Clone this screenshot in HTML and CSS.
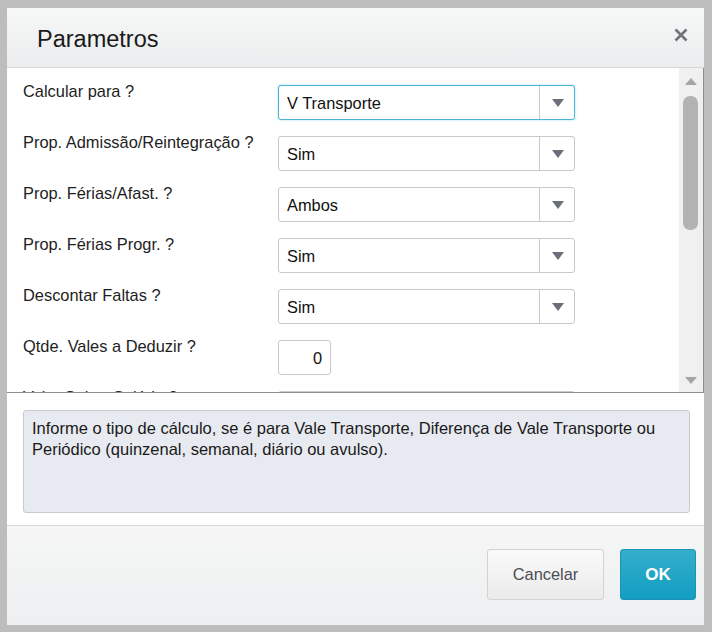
FILE: index.html
```html
<!DOCTYPE html>
<html lang="pt">
<head>
<meta charset="utf-8">
<title>Parametros</title>
<link rel="stylesheet" href="styles.css">
</head>
<body>
<div class="dialog">
  <div class="dlg-header">
    <h1 class="dlg-title">Parametros</h1>
    <button class="dlg-close" aria-label="Fechar">
      <svg width="14" height="14" viewBox="0 0 14 14"><path d="M1.5 1.5 L12.5 12.5 M12.5 1.5 L1.5 12.5" stroke="#6f737a" stroke-width="2.6" fill="none"/></svg>
    </button>
  </div>
  <div class="dlg-scroll">
    <div class="form">
      <div class="row">
        <label class="lbl">Calcular para ?</label>
        <div class="select focused"><span class="sel-text">V Transporte</span><span class="sel-btn"><i class="caret"></i></span></div>
      </div>
      <div class="row">
        <label class="lbl">Prop. Admissão/Reintegração ?</label>
        <div class="select"><span class="sel-text">Sim</span><span class="sel-btn"><i class="caret"></i></span></div>
      </div>
      <div class="row">
        <label class="lbl">Prop. Férias/Afast. ?</label>
        <div class="select"><span class="sel-text">Ambos</span><span class="sel-btn"><i class="caret"></i></span></div>
      </div>
      <div class="row">
        <label class="lbl">Prop. Férias Progr. ?</label>
        <div class="select"><span class="sel-text">Sim</span><span class="sel-btn"><i class="caret"></i></span></div>
      </div>
      <div class="row">
        <label class="lbl">Descontar Faltas ?</label>
        <div class="select"><span class="sel-text">Sim</span><span class="sel-btn"><i class="caret"></i></span></div>
      </div>
      <div class="row">
        <label class="lbl">Qtde. Vales a Deduzir ?</label>
        <div class="num">0</div>
      </div>
      <div class="row">
        <label class="lbl">Valor Sobre Salário ?</label>
        <div class="select"><span class="sel-text">Sim</span><span class="sel-btn"><i class="caret"></i></span></div>
      </div>
    </div>
    <div class="vscroll">
      <i class="sb-up"></i>
      <div class="sb-track"><div class="sb-thumb"></div></div>
      <i class="sb-down"></i>
    </div>
  </div>
  <div class="help-wrap">
    <div class="help">Informe o tipo de cálculo, se é para Vale Transporte, Diferença de Vale Transporte ou Periódico (quinzenal, semanal, diário ou avulso).</div>
  </div>
  <div class="dlg-footer">
    <button class="btn btn-cancel">Cancelar</button>
    <button class="btn btn-ok">OK</button>
  </div>
</div>
</body>
</html>
```

FILE: styles.css
```css
* { box-sizing: border-box; }
html, body { margin: 0; padding: 0; }
body {
  background: #bdbdbd;
  font-family: Arial, "Liberation Sans", sans-serif;
  color: #222;
  width: 712px;
  height: 632px;
  overflow: hidden;
}
.dialog {
  margin: 8px 8px 0 7px;
  width: 697px;
  height: 617px;
  background: #fff;
  display: flex;
  flex-direction: column;
}
.dlg-header {
  height: 60px;
  flex: none;
  display: flex;
  align-items: center;
  justify-content: space-between;
  padding: 0 16px 0 30px;
  background: linear-gradient(#f6f7f7, #ebeced);
  border-bottom: 1px solid #d5d7d8;
}
.dlg-title {
  margin: 0;
  font-size: 23.5px;
  font-weight: normal;
  color: #1a1a1a;
  padding-top: 3px;
}
.dlg-close {
  border: 0;
  background: none;
  padding: 0;
  width: 14px;
  height: 14px;
  display: flex;
  margin-bottom: 5px;
}
.dlg-scroll {
  height: 325px;
  flex: none;
  display: flex;
  overflow: hidden;
  border-bottom: 1px solid #8e8e8e;
  border-right: 1px solid #8e8e8e;
}
.form {
  flex: 1;
  padding: 17px 0 0 16px;
  display: flex;
  flex-direction: column;
  gap: 16px;
}
.row {
  display: grid;
  grid-template-columns: 255px 297px;
  align-items: start;
}
.lbl {
  font-size: 16.4px;
  line-height: 12px;
  color: #1e1e1e;
}
.select {
  height: 35px;
  border: 1px solid #c9c9c9;
  border-radius: 3px;
  display: flex;
  background: #fff;
}
.select.focused {
  border-color: #49b6d6;
  box-shadow: 0 0 2px rgba(73, 182, 214, 0.6);
}
.sel-text {
  flex: 1;
  display: flex;
  align-items: center;
  padding-left: 8px;
  padding-top: 1px;
  font-size: 16.4px;
  color: #111;
}
.sel-btn {
  width: 35px;
  border-left: 1px solid #c9c9c9;
  display: flex;
  align-items: center;
  justify-content: center;
}
.caret {
  width: 0;
  height: 0;
  border-left: 6px solid transparent;
  border-right: 6px solid transparent;
  border-top: 8px solid #6b6f79;
  margin-left: 1px;
}
.num {
  width: 53px;
  height: 35px;
  border: 1px solid #c9c9c9;
  border-radius: 3px;
  display: flex;
  align-items: center;
  justify-content: flex-end;
  padding-right: 8px;
  padding-top: 1px;
  font-size: 16.4px;
  color: #111;
}
.vscroll {
  width: 24px;
  flex: none;
  background: #f0f0f0;
  display: flex;
  flex-direction: column;
  align-items: center;
  padding: 10px 5px 8px 4px;
}
.sb-up, .sb-down {
  width: 0;
  height: 0;
  border-left: 6px solid transparent;
  border-right: 6px solid transparent;
}
.sb-up { border-bottom: 7px solid #a5a5a5; }
.sb-down { border-top: 7px solid #a5a5a5; }
.sb-track {
  flex: 1;
  width: 15px;
  padding-top: 11px;
}
.sb-thumb {
  width: 15px;
  height: 134px;
  border-radius: 7px;
  background: #b3b3b3;
}
.help-wrap {
  flex: none;
  padding: 17px 14px 12px 16px;
  border-bottom: 1px solid #d6d6d6;
}
.help {
  height: 103px;
  background: #e8eaf1;
  border: 1px solid #c9cacd;
  border-radius: 3px;
  padding: 7px 8px;
  font-size: 16.5px;
  line-height: 21px;
  color: #1a1a1a;
}
.dlg-footer {
  flex: 1;
  display: flex;
  justify-content: flex-end;
  align-items: flex-start;
  gap: 16px;
  padding: 23px 8px 0 0;
  background: linear-gradient(#f5f6f5, #eeeff1);
}
.btn {
  height: 51px;
  border-radius: 3px;
  font-family: Arial, "Liberation Sans", sans-serif;
  font-size: 16.4px;
  cursor: pointer;
}
.btn-cancel {
  width: 117px;
  background: linear-gradient(#fafafa, #ebebeb);
  border: 1px solid #d2d2d2;
  color: #4a4d55;
}
.btn-ok {
  width: 76px;
  background: linear-gradient(#35aecb, #129ec2);
  border: 1px solid #1a95b6;
  color: #fff;
  font-weight: bold;
  font-size: 17px;
}
```
